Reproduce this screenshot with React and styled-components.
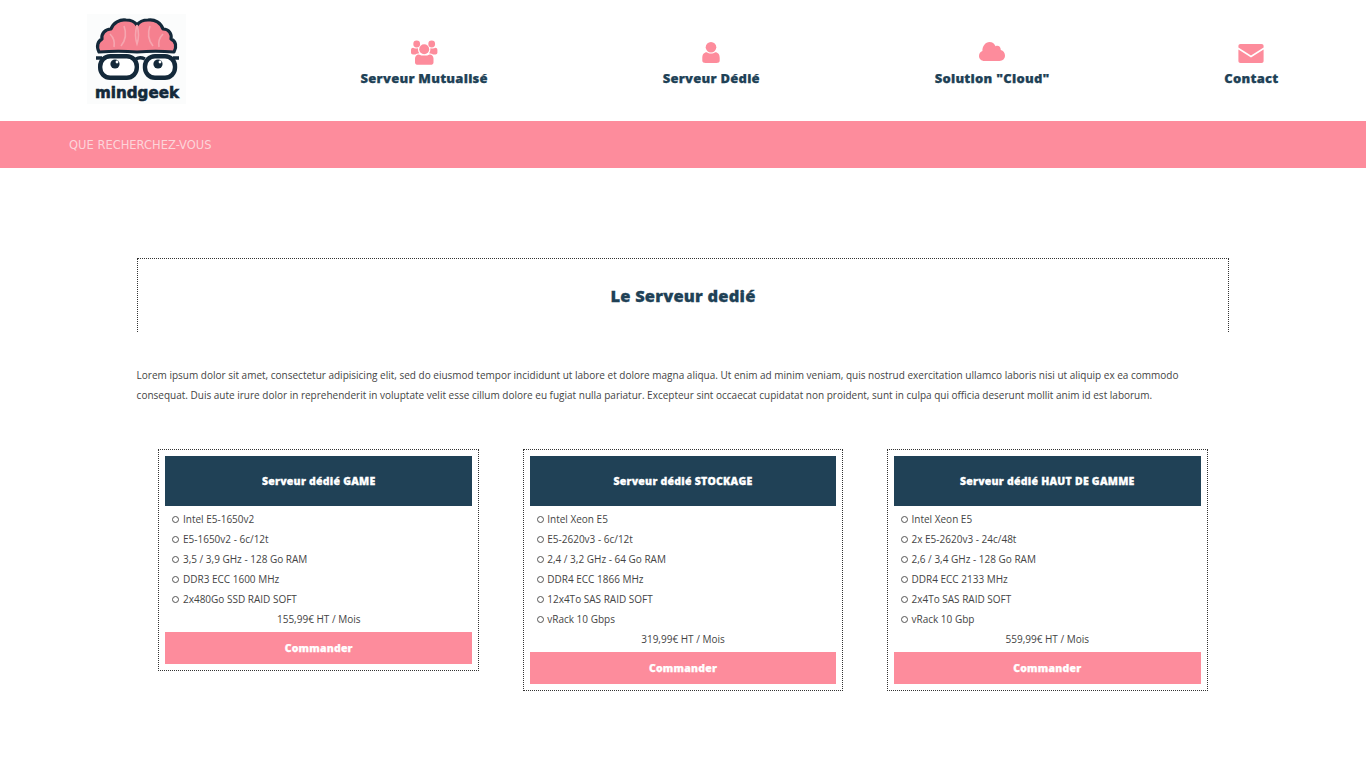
import React from "react";
import styled, { createGlobalStyle } from "styled-components";

const PINK = "#fd8c9c";
const NAVY = "#204156";
const INK = "#14293a";
const HEAD_FONT = `"Open Sans", "DejaVu Sans", sans-serif`;

const Global = createGlobalStyle`
  html, body { margin: 0; padding: 0; background: #fff; }
  body { font-family: "Open Sans", "Liberation Sans", sans-serif; font-size: 10px; color: #444; }
  * { box-sizing: border-box; }
`;

const Header = styled.header`
  display: flex;
  height: 121px;
  background: #fff;
`;
const LogoCol = styled.div`
  width: 20%;
  display: flex;
  justify-content: center;
  padding-top: 14px;
`;
const Nav = styled.nav`
  width: 80%;
  display: flex;
  justify-content: space-around;
`;
const NavItem = styled.a`
  display: flex;
  flex-direction: column;
  align-items: center;
  padding-top: 40px;
  font-family: ${HEAD_FONT};
  font-weight: 800;
  font-size: 13px;
  letter-spacing: 0.25px;
  -webkit-text-stroke: 0.25px ${NAVY};
  color: ${NAVY};
  white-space: nowrap;
`;
const NavIcon = styled.svg`
  display: block;
  height: 26px;
  width: 28px;
  fill: ${PINK};
  margin-bottom: 3px;
`;
const Bar = styled.div`
  height: 47px;
  background: ${PINK};
  display: flex;
  align-items: center;
  padding: 1px 0 0 69px;
  font-family: "DejaVu Sans", sans-serif;
  font-size: 11.5px;
  color: #fcd5da;
`;
const Main = styled.main`
  width: 80%;
  margin: 90px auto 0;
`;
const TitleBox = styled.div`
  height: 74px;
  border: 1px dotted #333;
  border-bottom: 0;
  display: flex;
  align-items: center;
  justify-content: center;
`;
const Title = styled.h1`
  margin: 0;
  font-family: ${HEAD_FONT};
  font-size: 16.5px;
  font-weight: 800;
  letter-spacing: 0.2px;
  -webkit-text-stroke: 0.3px ${NAVY};
  color: ${NAVY};
`;
const Lorem = styled.p`
  margin: 33px 0 44px;
  line-height: 20px;
`;
const Cards = styled.div`
  display: flex;
  justify-content: space-around;
  align-items: flex-start;
`;
const Card = styled.article`
  width: 29.33%;
  border: 1px dotted #333;
  padding: 6px;
`;
const CardHead = styled.h2`
  margin: 0;
  height: 50px;
  background: ${NAVY};
  color: #fff;
  font-family: ${HEAD_FONT};
  font-size: 10.5px;
  font-weight: 800;
  letter-spacing: 0.25px;
  -webkit-text-stroke: 0.3px #fff;
  display: flex;
  align-items: center;
  justify-content: center;
  white-space: pre;
`;
const Specs = styled.ul`
  margin: 3px 0 0;
  padding: 0 0 0 17.5px;
  list-style: none;
  line-height: 20px;
`;
const Spec = styled.li`
  position: relative;
  &::before {
    content: "";
    position: absolute;
    left: -10.5px;
    top: 7px;
    width: 5px;
    height: 5px;
    border-radius: 50%;
    border: 1px solid #555;
  }
`;
const Price = styled.div`
  text-align: center;
  line-height: 20px;
  margin-bottom: 3px;
`;
const Order = styled.button`
  display: block;
  width: 100%;
  height: 32px;
  border: 0;
  background: ${PINK};
  color: #fff;
  font-family: ${HEAD_FONT};
  font-size: 10.5px;
  font-weight: 800;
  letter-spacing: 0.2px;
  -webkit-text-stroke: 0.25px #fff;
`;

const Logo = () => (
  <svg width="99" height="90" viewBox="0 0 99 90">
    <rect width="99" height="90" fill="#fbfcfc" />
    <path
      d="M12 38 C9 32 11 27 15 25 C14 20 18 15 24 15 C26 9 33 5 39 6 C44 6 48 8 50 11 C52 8 56 6 61 6 C68 5 74 9 76 15 C82 15 85 20 84 25 C89 27 90 33 87 38 C75 37 62 37 50 38 C38 37 25 37 12 38 Z"
      fill="#f5808f"
      stroke={INK}
      strokeWidth="3.2"
      strokeLinejoin="round"
    />
    <path d="M50 11 C48 18 48 24 50 30 C52 24 52 18 50 11 M37 12 C40 20 38 27 34 32 M63 12 C60 20 62 27 66 32 M23 20 C27 24 28 28 27 33 M76 20 C72 24 71 28 72 33" fill="none" stroke="#f6a6b0" strokeWidth="1.6" />
    <rect x="13.2" y="42.2" width="36.6" height="21.6" rx="10" fill="#fff" stroke={INK} strokeWidth="4.4" />
    <rect x="58" y="42.2" width="30" height="21.6" rx="10" fill="#fff" stroke={INK} strokeWidth="4.4" />
    <path d="M49 45 C52 43 54 43 58 45 M9 44 L15 44 M86 44 L92 44" fill="none" stroke={INK} strokeWidth="3.4" />
    <circle cx="28" cy="50" r="4.6" fill={INK} />
    <circle cx="71" cy="50" r="4.6" fill={INK} />
    <circle cx="30" cy="48" r="1.4" fill="#fff" />
    <circle cx="73" cy="48" r="1.4" fill="#fff" />
    <text x="50" y="84" textAnchor="middle" textLength="84" lengthAdjust="spacingAndGlyphs" fontFamily="DejaVu Sans, sans-serif" fontWeight="700" fontSize="15.5" stroke={INK} strokeWidth="0.6" fill={INK}>mindgeek</text>
  </svg>
);

const UsersIcon = () => (
  <NavIcon viewBox="0 0 28 26">
    <circle cx="6.7" cy="4" r="3.4" />
    <circle cx="21.7" cy="4" r="3.4" />
    <circle cx="14.2" cy="9.3" r="5" />
    <path d="M1 10 C1 8.5 2 7.8 3 7.8 C4.2 8.6 6 8.6 8 8.2 C7.9 10.5 8.4 12 9.3 13.3 C7.5 13.5 6.3 14 5.5 14.4 L3 14.4 C1.8 14.4 1 13.5 1 12.4 Z" />
    <path d="M27.4 10 C27.4 8.5 26.4 7.8 25.4 7.8 C24.2 8.6 22.4 8.6 20.4 8.2 C20.5 10.5 20 12 19.1 13.3 C20.9 13.5 22.1 14 22.9 14.4 L25.4 14.4 C26.6 14.4 27.4 13.5 27.4 12.4 Z" />
    <path d="M5 18.5 C5 16 6.8 14.2 9 14.4 C11.5 16 17 16 19.5 14.4 C21.7 14.2 23.5 16 23.5 18.5 L23.5 22.5 C23.5 24 22.2 24.8 20.5 24.8 L8 24.8 C6.3 24.8 5 24 5 22.5 Z" />
  </NavIcon>
);
const UserIcon = () => (
  <NavIcon viewBox="0 0 28 26">
    <circle cx="14" cy="7.3" r="5.3" />
    <path d="M5.3 18 C5.3 14.5 7 12.3 9.8 12.3 C12 14 16 14 18.2 12.3 C21 12.3 22.7 14.5 22.7 18 L22.7 20.5 C22.7 22.3 21.3 23 19.5 23 L8.5 23 C6.7 23 5.3 22.3 5.3 20.5 Z" />
  </NavIcon>
);
const CloudIcon = () => (
  <NavIcon viewBox="0 0 28 26">
    <path d="M6.5 21 C3.2 21 1 18.7 1 16 C1 13.6 2.4 11.8 4.4 11.1 C4.3 6 7.5 2 11.5 2 C14.3 2 16.4 3.6 17.6 6.2 C20.2 5 22.8 6.8 22.8 9.9 C25.4 10.4 27 12.8 27 15.6 C27 18.8 24.8 21 21.5 21 Z" />
  </NavIcon>
);
const MailIcon = () => (
  <NavIcon viewBox="0 0 28 26">
    <path d="M3.5 4 L24.5 4 C25.8 4 26.6 4.9 26.6 6 L26.6 7.6 L14 15.6 L1.4 7.6 L1.4 6 C1.4 4.9 2.2 4 3.5 4 Z" />
    <path d="M1.4 9.6 L14 17.6 L26.6 9.6 L26.6 21 C26.6 22.1 25.8 23 24.5 23 L3.5 23 C2.2 23 1.4 22.1 1.4 21 Z" />
  </NavIcon>
);

const navItems = [
  { label: "Serveur Mutualisé", Icon: UsersIcon },
  { label: "Serveur Dédié", Icon: UserIcon },
  { label: 'Solution "Cloud"', Icon: CloudIcon },
  { label: "Contact", Icon: MailIcon },
];

const offers = [
  { name: "GAME", specs: ["Intel E5-1650v2", "E5-1650v2 - 6c/12t", "3,5 / 3,9 GHz - 128 Go RAM", "DDR3 ECC 1600 MHz", "2x480Go SSD RAID SOFT"], price: "155,99€ HT / Mois" },
  { name: "STOCKAGE", specs: ["Intel Xeon E5", "E5-2620v3 - 6c/12t", "2,4 / 3,2 GHz - 64 Go RAM", "DDR4 ECC 1866 MHz", "12x4To SAS RAID SOFT", "vRack 10 Gbps"], price: "319,99€ HT / Mois" },
  { name: "HAUT DE GAMME", specs: ["Intel Xeon E5", "2x E5-2620v3 - 24c/48t", "2,6 / 3,4 GHz - 128 Go RAM", "DDR4 ECC 2133 MHz", "2x4To SAS RAID SOFT", "vRack 10 Gbp"], price: "559,99€ HT / Mois" },
];

export default function App() {
  return (
    <>
      <Global />
      <Header>
        <LogoCol><Logo /></LogoCol>
        <Nav>
          {navItems.map(({ label, Icon }) => (
            <NavItem key={label}><Icon />{label}</NavItem>
          ))}
        </Nav>
      </Header>
      <Bar>QUE RECHERCHEZ-VOUS</Bar>
      <Main>
        <TitleBox><Title>Le Serveur dedié</Title></TitleBox>
        <Lorem>
          Lorem ipsum dolor sit amet, consectetur adipisicing elit, sed do eiusmod tempor incididunt ut labore et dolore magna aliqua. Ut enim ad minim veniam, quis nostrud exercitation ullamco laboris nisi ut aliquip ex ea commodo consequat. Duis aute irure dolor in reprehenderit in voluptate velit esse cillum dolore eu fugiat nulla pariatur. Excepteur sint occaecat cupidatat non proident, sunt in culpa qui officia deserunt mollit anim id est laborum.
        </Lorem>
        <Cards>
          {offers.map((o) => (
            <Card key={o.name}>
              <CardHead>Serveur dédié {o.name}</CardHead>
              <Specs>{o.specs.map((s) => <Spec key={s}>{s}</Spec>)}</Specs>
              <Price>{o.price}</Price>
              <Order>Commander</Order>
            </Card>
          ))}
        </Cards>
      </Main>
    </>
  );
}
